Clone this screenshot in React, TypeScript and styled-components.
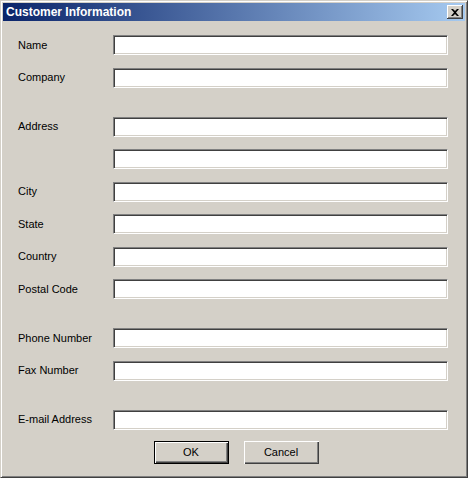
import React, { FunctionComponent } from 'react';
import styled, { createGlobalStyle } from 'styled-components';

const GlobalStyle = createGlobalStyle`
  html, body {
    margin: 0;
    padding: 0;
    background: #d4d0c8;
  }
  * {
    box-sizing: border-box;
  }
`;

const Window = styled.div`
  width: 468px;
  height: 478px;
  background: #d4d0c8;
  border: 1px solid;
  border-color: #d4d0c8 #404040 #404040 #d4d0c8;
  box-shadow: inset 1px 1px #ffffff, inset -1px -1px #808080;
  padding: 2px;
  display: flex;
  flex-direction: column;
  font-family: 'Liberation Sans', Arial, sans-serif;
  font-size: 11px;
  color: #000;
`;

const TitleBar = styled.div`
  height: 18px;
  display: flex;
  align-items: center;
  justify-content: space-between;
  padding: 0 2px 0 3px;
  background: linear-gradient(to right, #0a246a, #a6caf0);
`;

const Title = styled.span`
  color: #fff;
  font-weight: bold;
  font-size: 12px;
`;

const CloseButton = styled.div`
  width: 16px;
  height: 14px;
  background: #d4d0c8;
  display: flex;
  align-items: center;
  justify-content: center;
  box-shadow: inset -1px -1px #404040, inset 1px 1px #ffffff,
    inset -2px -2px #808080;
`;

const Form = styled.div`
  display: flex;
  flex-direction: column;
  padding: 14px 17px 0 15px;
`;

const Row = styled.div<{ $space?: boolean }>`
  display: grid;
  grid-template-columns: 96px 334px;
  align-items: center;
  height: 20px;
  margin-top: ${(p) => (p.$space ? '29px' : '12.5px')};
  &:first-child {
    margin-top: 0;
  }
`;

const Label = styled.label`
  padding-bottom: 1px;
`;

const Field = styled.input`
  height: 20px;
  width: 335px;
  margin-left: -1px;
  border: 1px solid;
  border-color: #808080 #ffffff #ffffff #808080;
  box-shadow: inset 1px 1px #404040, inset -1px -1px #d4d0c8;
  background: #fff;
  padding: 2px 3px;
  font-family: inherit;
  font-size: 11px;
  outline: none;
`;

const ButtonBar = styled.div`
  display: flex;
  justify-content: center;
  gap: 15px;
  margin-top: 11px;
  padding-left: 6px;
`;

const Button = styled.button<{ $default?: boolean }>`
  width: 75px;
  height: 23px;
  background: #d4d0c8;
  font-family: 'Liberation Sans', Arial, sans-serif;
  font-size: 11px;
  color: #000;
  padding: 0;
  border: ${(p) => (p.$default ? '1px solid #000' : 'none')};
  box-shadow: inset 1px 1px #ffffff, inset -1px -1px #404040,
    inset -2px -2px #808080;
`;

const fields: { label: string; space?: boolean }[] = [
  { label: 'Name' },
  { label: 'Company' },
  { label: 'Address', space: true },
  { label: '' },
  { label: 'City' },
  { label: 'State' },
  { label: 'Country' },
  { label: 'Postal Code' },
  { label: 'Phone Number', space: true },
  { label: 'Fax Number' },
  { label: 'E-mail Address', space: true },
];

const App: FunctionComponent = () => {
  return (
    <>
      <GlobalStyle />
      <Window>
        <TitleBar>
          <Title>Customer Information</Title>
          <CloseButton>
            <svg width="8" height="7" viewBox="0 0 8 7">
              <path d="M0 0h2l2 2 2-2h2L5 3.5 8 7H6L4 5 2 7H0l3-3.5z" fill="#000" />
            </svg>
          </CloseButton>
        </TitleBar>
        <Form>
          {fields.map((f, i) => (
            <Row key={f.label + i} $space={f.space}>
              <Label>{f.label}</Label>
              <Field type="text" />
            </Row>
          ))}
          <ButtonBar>
            <Button $default>OK</Button>
            <Button>Cancel</Button>
          </ButtonBar>
        </Form>
      </Window>
    </>
  );
};

export default App;
